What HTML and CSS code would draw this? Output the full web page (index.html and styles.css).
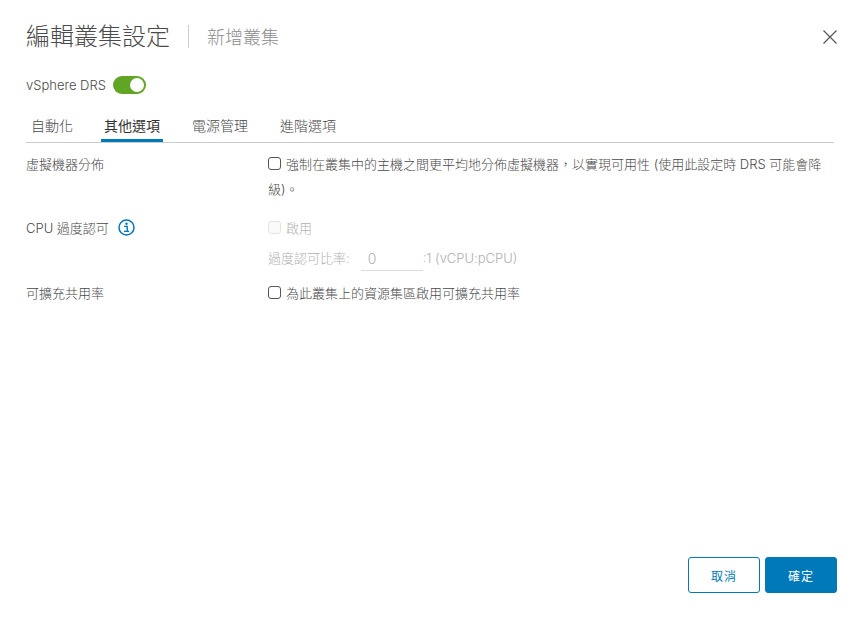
FILE: index.html
```html
<!DOCTYPE html>
<html lang="zh-Hant">
<head>
  <meta charset="UTF-8" />
  <title>編輯叢集設定</title>
  <link rel="stylesheet" href="styles.css">
</head>
<body>
  <div class="modal">
    <div class="modal-header">
      <h3 class="modal-title">編輯叢集設定</h3>
      <span class="modal-subtitle">新增叢集</span>
      <button class="close-btn" aria-label="close">
        <svg width="14" height="14" viewBox="0 0 14 14"><path d="M0.5 0.5 L13.5 13.5 M13.5 0.5 L0.5 13.5" stroke="#565656" stroke-width="1.2" fill="none"/></svg>
      </button>
    </div>

    <div class="drs-row">
      <span>vSphere DRS</span>
      <span class="toggle"><span class="toggle-knob"></span></span>
    </div>

    <ul class="tabs">
      <li class="tab">自動化</li>
      <li class="tab active">其他選項</li>
      <li class="tab">電源管理</li>
      <li class="tab">進階選項</li>
    </ul>

    <div class="form">
      <div class="form-label">虛擬機器分佈</div>
      <div class="form-control">
        <label class="check-line">
          <span class="checkbox"></span>
          <span class="first-line">強制在叢集中的主機之間更平均地分佈虛擬機器，以實現可用性 (使用此設定時 DRS 可能會降</span>
        </label>
        <div>級)。</div>
      </div>

      <div class="form-label label-cpu">
        CPU 過度認可
        <svg class="info-icon" width="17" height="17" viewBox="0 0 17 17">
          <circle cx="8.5" cy="8.5" r="7.5" stroke="#0079b8" stroke-width="1.5" fill="none"/>
          <circle cx="8.5" cy="4.8" r="1.2" fill="#0079b8"/>
          <path d="M6 7.4 H9.2 V12 M6 12.4 H11.2" stroke="#0079b8" stroke-width="1.4" fill="none"/>
        </svg>
      </div>
      <div class="form-control control-cpu">
        <label class="check-line disabled">
          <span class="checkbox checkbox-disabled"></span>
          <span>啟用</span>
        </label>
        <div class="ratio-row">
          <span>過度認可比率:</span>
          <span class="ratio-input">0</span>
          <span>:1 (vCPU:pCPU)</span>
        </div>
      </div>

      <div class="form-label">可擴充共用率</div>
      <div class="form-control">
        <label class="check-line">
          <span class="checkbox"></span>
          <span>為此叢集上的資源集區啟用可擴充共用率</span>
        </label>
      </div>
    </div>

    <div class="modal-footer">
      <button class="btn btn-outline">取消</button>
      <button class="btn btn-primary">確定</button>
    </div>
  </div>
</body>
</html>
```
FILE: styles.css
```css
* {
  box-sizing: border-box;
}

html, body {
  margin: 0;
  height: 100%;
}

body {
  font-family: 'Inter', 'Noto Sans CJK TC', sans-serif;
  font-size: 13px;
  font-weight: 300;
  color: #4a4a4a;
  background-color: #fff;
}

.modal {
  height: 617px;
  padding: 19px 23px 24px 26px;
  display: flex;
  flex-direction: column;
}

.modal-header {
  display: flex;
  align-items: center;
  height: 34px;
}

.modal-title {
  margin: 0;
  font-size: 24px;
  font-weight: 300;
  color: #4a4a4a;
  padding-right: 18px;
  border-right: 1px solid #ccc;
  line-height: 23px;
}

.modal-subtitle {
  font-size: 18px;
  font-weight: 300;
  color: #8c8c8c;
  margin-left: 18px;
}

.close-btn {
  margin-left: auto;
  margin-top: 1px;
  padding: 0;
  border: none;
  background: none;
  line-height: 0;
}

.drs-row {
  display: flex;
  align-items: center;
  gap: 7px;
  margin-top: 22px;
  height: 20px;
}

.toggle {
  width: 33px;
  height: 18px;
  border-radius: 9px;
  background-color: #60a624;
  position: relative;
}

.toggle-knob {
  position: absolute;
  right: 2px;
  top: 2px;
  width: 14px;
  height: 14px;
  border-radius: 50%;
  background-color: #fff;
}

.tabs {
  list-style: none;
  margin: 15px 3px 0 0;
  padding: 0 0 0 1px;
  display: flex;
  gap: 26px;
  border-bottom: 1px solid #ccc;
  height: 33px;
}

.tab {
  padding: 0 3px;
  font-size: 14px;
  line-height: 32px;
  height: 32px;
}

.tab:first-child {
  padding-left: 4px;
  margin-right: -1px;
}

.tab.active {
  color: #333;
  border-bottom: 3px solid #0079b8;
  font-weight: 400;
}

.form {
  display: grid;
  grid-template-columns: 242px 566px;
  margin-top: 9px;
  line-height: 25px;
}

.label-cpu {
  display: flex;
  align-items: flex-start;
  gap: 9px;
  margin-top: 14px;
}

.info-icon {
  margin-top: 3px;
}

.control-cpu {
  margin-top: 14px;
  margin-bottom: 10px;
}

.check-line {
  display: flex;
  gap: 5px;
}

.first-line {
  white-space: nowrap;
}

.checkbox {
  flex: none;
  width: 13px;
  height: 13px;
  margin-top: 5px;
  border: 1px solid #565656;
  border-radius: 3px;
  background-color: #fff;
}

.checkbox-disabled {
  border-color: #e3e3e3;
  background-color: #fafafa;
}

.disabled,
.ratio-row {
  color: #b0b0b0;
}

.ratio-row {
  display: flex;
  align-items: center;
  margin-top: 5px;
  height: 25px;
}

.ratio-input {
  width: 62px;
  margin-left: 11px;
  padding-left: 7px;
  height: 25px;
  border-bottom: 1px solid #ddd;
  font-size: 14px;
}

.modal-footer {
  margin-top: auto;
  display: flex;
  justify-content: flex-end;
  gap: 5px;
}

.btn {
  width: 72px;
  height: 36px;
  border-radius: 3px;
  font-family: inherit;
  font-size: 12px;
  letter-spacing: 1px;
}

.btn-outline {
  background-color: #fff;
  color: #0079b8;
  border: 1px solid #0079b8;
}

.btn-primary {
  background-color: #0079b8;
  color: #fff;
  border: 1px solid #0079b8;
}
```
